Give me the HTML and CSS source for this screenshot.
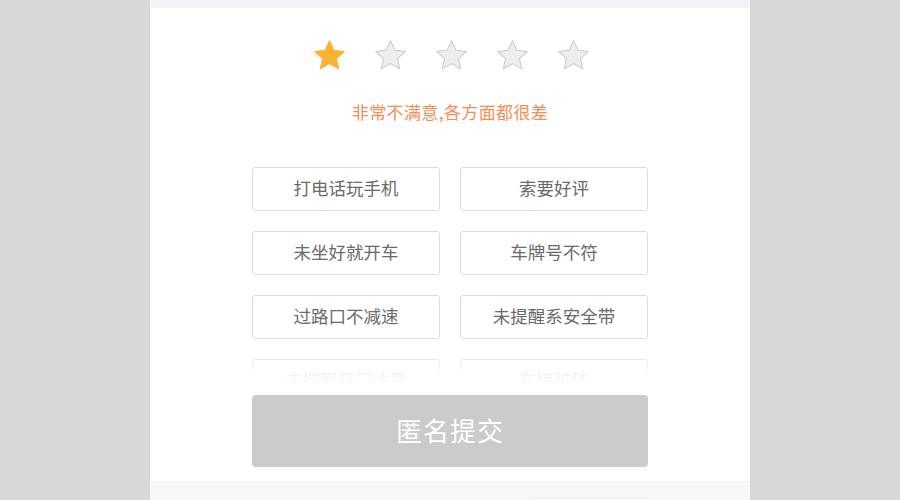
FILE: index.html
```html
<!DOCTYPE html>
<html lang="zh-CN">
<head>
<meta charset="utf-8">
<title>评价</title>
<link rel="stylesheet" href="styles.css">
</head>
<body>
<div class="phone">
  <div class="top-strip"></div>
  <div class="content">
    <div class="stars">
      <svg class="star on" viewBox="0 0 24 24"><path d="M12 1.8l3 6.6 7.2.8-5.4 4.9 1.5 7.1L12 17.6l-6.3 3.6 1.5-7.1-5.4-4.9 7.2-.8z"/></svg>
      <svg class="star" viewBox="0 0 24 24"><path d="M12 1.8l3 6.6 7.2.8-5.4 4.9 1.5 7.1L12 17.6l-6.3 3.6 1.5-7.1-5.4-4.9 7.2-.8z"/></svg>
      <svg class="star" viewBox="0 0 24 24"><path d="M12 1.8l3 6.6 7.2.8-5.4 4.9 1.5 7.1L12 17.6l-6.3 3.6 1.5-7.1-5.4-4.9 7.2-.8z"/></svg>
      <svg class="star" viewBox="0 0 24 24"><path d="M12 1.8l3 6.6 7.2.8-5.4 4.9 1.5 7.1L12 17.6l-6.3 3.6 1.5-7.1-5.4-4.9 7.2-.8z"/></svg>
      <svg class="star" viewBox="0 0 24 24"><path d="M12 1.8l3 6.6 7.2.8-5.4 4.9 1.5 7.1L12 17.6l-6.3 3.6 1.5-7.1-5.4-4.9 7.2-.8z"/></svg>
    </div>
    <p class="rating-text">非常不满意,各方面都很差</p>
    <div class="tags-wrap">
      <div class="tags">
        <div class="tag">打电话玩手机</div>
        <div class="tag">索要好评</div>
        <div class="tag">未坐好就开车</div>
        <div class="tag">车牌号不符</div>
        <div class="tag">过路口不减速</div>
        <div class="tag">未提醒系安全带</div>
        <div class="tag">未提醒开门注意</div>
        <div class="tag">车辆脏破</div>
      </div>
      <div class="fade"></div>
    </div>
    <button class="submit">匿名提交</button>
  </div>
  <div class="bottom-strip"><div class="bottom-box"></div></div>
</div>
</body>
</html>
```

FILE: styles.css
```css
html, body {
  margin: 0;
  padding: 0;
  background: #d8d8d8;
  font-family: "Noto Sans CJK SC", "Noto Sans", sans-serif;
}

.phone {
  width: 600px;
  height: 500px;
  margin: 0 auto;
  background: #ffffff;
  display: flex;
  flex-direction: column;
  overflow: hidden;
}

.top-strip {
  height: 8px;
  background: #f4f4f8;
  flex: none;
}

.content {
  display: flex;
  flex-direction: column;
  align-items: center;
  padding-top: 30px;
  padding-bottom: 14px;
}

.stars {
  display: flex;
  gap: 26px;
  height: 36px;
  padding-left: 2px;
}

.star {
  width: 35px;
  height: 35px;
  fill: #eeeeef;
  stroke: #c9c9c9;
  stroke-width: 0.7;
  stroke-linejoin: round;
}

.star.on {
  fill: #fbb232;
  stroke: #fbb232;
}

.rating-text {
  margin: 26px 0 0;
  font-size: 17px;
  line-height: 24px;
  letter-spacing: 0.4px;
  color: #f28e55;
}

.tags-wrap {
  position: relative;
  margin-top: 43px;
  width: 396px;
  height: 218px;
  overflow: hidden;
}

.tags {
  display: grid;
  grid-template-columns: 1fr 1fr;
  column-gap: 20px;
  row-gap: 20px;
}

.tag {
  box-sizing: border-box;
  height: 44px;
  padding-bottom: 3px;
  border: 1px solid #dcdcdc;
  border-radius: 3px;
  display: flex;
  align-items: center;
  justify-content: center;
  font-size: 17.5px;
  color: #6a6a6a;
}

.fade {
  position: absolute;
  left: 0;
  right: 0;
  bottom: 0;
  height: 28px;
  background: linear-gradient(to bottom, rgba(255,255,255,0.25), rgba(255,255,255,0.9) 60%, #ffffff);
}

.submit {
  margin-top: 10px;
  width: 396px;
  height: 72px;
  border: none;
  border-radius: 4px;
  background: #cbcacd;
  color: #ffffff;
  font-family: "Noto Sans CJK SC", "Noto Sans", sans-serif;
  font-size: 26px;
  letter-spacing: 1px;
  padding: 0 0 4px;
}

.bottom-strip {
  flex: 1;
  background: #f7f7f9;
  padding-top: 17px;
  padding-left: 385px;
}

.bottom-box {
  width: 113px;
  height: 10px;
  background: #ffffff;
  border-top: 1px solid #eeeeee;
}
```
